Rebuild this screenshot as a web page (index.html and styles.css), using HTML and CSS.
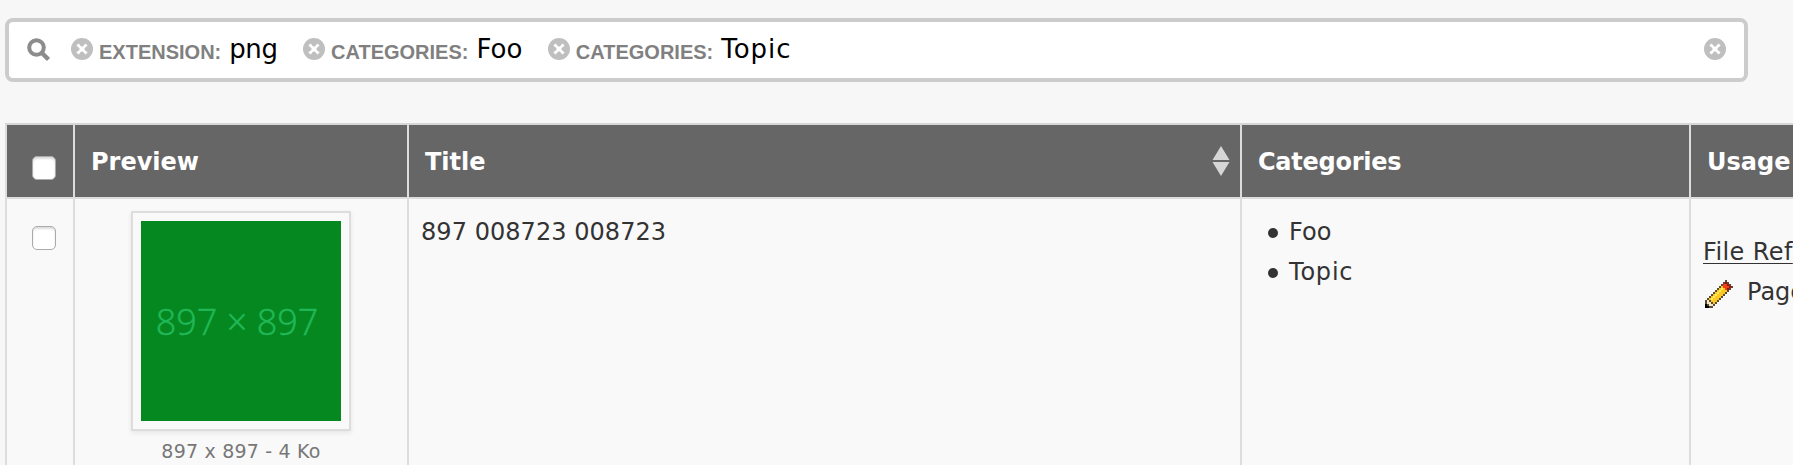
FILE: index.html
```html
<!DOCTYPE html>
<html lang="en">
<head>
<meta charset="utf-8">
<title>Files</title>
<link rel="stylesheet" href="styles.css">
</head>
<body>
<svg class="defs" aria-hidden="true">
  <symbol id="remove" viewBox="0 0 22 22">
    <circle cx="11" cy="11" r="11" fill="#bfbfbf"/>
    <path d="M7.500 7.500L14.500 14.500M14.500 7.500L7.500 14.500" stroke="#fff" stroke-width="3" stroke-linecap="square"/>
    <path d="M9.500 5h3v3h-3zM9.500 14h3v3h-3zM5 9.500h3v3H5zM14 9.500h3v3h-3z" fill="#bfbfbf"/>
  </symbol>
</svg>
<div class="search">
  <svg class="magnifier" viewBox="0 0 24 24"><circle cx="9.500" cy="9.500" r="7.300" fill="none" stroke="#8c8c8c" stroke-width="4"/><path d="M15 15L21.500 21.500" stroke="#8c8c8c" stroke-width="4.500"/></svg>
  <div class="facet"><svg class="remove"><use href="#remove"/></svg><span class="key">EXTENSION:</span><span class="value png">png</span></div>
  <div class="facet"><svg class="remove"><use href="#remove"/></svg><span class="key">CATEGORIES:</span><span class="value">Foo</span></div>
  <div class="facet"><svg class="remove"><use href="#remove"/></svg><span class="key">CATEGORIES:</span><span class="value topic">Topic</span></div>
  <svg class="remove clear"><use href="#remove"/></svg>
</div>
<table class="files">
  <colgroup><col class="c-check"><col class="c-preview"><col class="c-title"><col class="c-cat"><col class="c-usage"></colgroup>
  <thead>
    <tr>
      <th class="check"><span class="box"></span></th>
      <th>Preview</th>
      <th><div class="sortable"><span>Title</span><svg class="sort" viewBox="0 0 18 30"><path d="M9 0L17.500 14H.5ZM.5 16H17.500L9 30Z" fill="#d6d6d6"/></svg></div></th>
      <th class="label-cat">Categories</th>
      <th class="label-usage">Usage</th>
    </tr>
  </thead>
  <tbody>
    <tr>
      <td class="check"><span class="box"></span></td>
      <td class="preview"><div class="frame"><div class="thumb">897 <span class="times">×</span> 897</div></div><div class="caption">897 x 897 - 4 Ko</div></td>
      <td class="title">897 008723 008723</td>
      <td class="cats"><ul><li>Foo</li><li class="topic">Topic</li></ul></td>
      <td class="usage"><div class="ref">File Ref</div><div class="page">
        <svg class="pencil" viewBox="0 0 14 14" shape-rendering="crispEdges">
          <path d="M10 0h1v1h1v1h1v1h1v1h-1v1h-1v1h-1v1h-1v1h-1v1h-1v1h-1v1h-1v1h-1v1h-1v1H0v-4h1V9h1V8h1V7h1V6h1V5h1V4h1V3h1V2h1V1h1z" fill="#574c3a"/>
          <path d="M8 3h1v1h1v1h1v1h-1v1H9v1H8v1H7v1H6v1H5v1H4v-1H3v-1H2V9h1V8h1V7h1V6h1V5h1V4h1z" fill="#ffc81e"/>
          <path d="M3 9h1V8h1V7h1V6h1V5h1V4h1v1H8v1H7v1H6v1H5v1H4v1H3z" fill="#ffef62"/>
          <path d="M9 2h3v2h-1v1h-1V4H9z" fill="#f04018"/>
          <path d="M10 1h1v1h1v1h1v1h-1v1h-1V4h1V3h-1V2h-1z" fill="#a41010"/>
          <path d="M1 10h1v1h1v1h1v1H2v-1H1z" fill="#f6e8c4"/>
          <path d="M0 12h1v1h1v1H0z" fill="#000"/>
        </svg><span>Page</span></div></td>
    </tr>
  </tbody>
</table>
</body>
</html>
```
FILE: styles.css
```css
body { margin: 0; height: 465px; overflow: hidden; background: #f7f7f7; color: #333; font: 24px/40px "DejaVu Sans", sans-serif; }
.defs { display: none; }
.search { box-sizing: border-box; width: 1743px; height: 64px; margin: 18px 0 41px 5px; padding: 0 18px; border: 4px solid #ccc; border-radius: 8px; background: #fff; display: flex; align-items: center; }
.magnifier { width: 24px; height: 24px; margin-right: 20px; }
.remove { width: 22px; height: 22px; margin-bottom: 2px; flex: none; }
.facet { display: flex; align-items: center; margin-right: 25.5px; }
.key { margin: 3px 0 0 6px; color: #808080; font: bold 20px/40px "Liberation Sans", sans-serif; }
.value { margin: 0 0 2px 8px; color: #000; font-size: 26px; }
.value.png { letter-spacing: -.4px; }
.value.topic { letter-spacing: 1px; }
.clear { margin-left: auto; }
.files { width: 1788px; margin-left: 5px; border-spacing: 0; table-layout: fixed; border-top: 2px solid #d6d6d6; background: #f9f9f9; }
.c-check { width: 68px; }
.c-preview { width: 334px; }
.c-title { width: 833px; }
.c-cat { width: 449px; }
th, td { box-sizing: border-box; border-left: 2px solid #ddd; border-bottom: 2px solid #ddd; text-align: left; }
th { height: 74px; padding: 1px 10px 0 16px; background: #666; color: #fff; }
td { height: 266px; padding: 13px 12px 0; border-bottom: 0; vertical-align: top; }
.check { padding-left: 25px; }
.box { box-sizing: border-box; display: block; width: 24px; height: 24px; border: 1px solid #aaa; border-radius: 5px; background: #fff; box-shadow: inset 0 2px 2px #ddd; }
th .box { margin-top: 13px; }
td .box { margin-top: 14px; }
.label-cat { letter-spacing: -.25px; }
.label-usage { padding-right: 0; }
.sortable { display: flex; align-items: center; justify-content: space-between; }
.sort { width: 18px; height: 30px; margin-bottom: 1px; }
td.preview { padding-top: 12px; text-align: center; font-size: 0; }
td.title { padding-left: 12px; letter-spacing: .05px; }
.frame { display: inline-block; padding: 8px; border: 2px solid #ddd; box-shadow: 0 2px 5px rgba(0,0,0,.08); }
.thumb { box-sizing: border-box; width: 200px; height: 200px; padding-right: 8px; background: #058820; color: #20b858; font: 300 36px/202px "Open Sans", sans-serif; -webkit-text-stroke: .5px #20b858; }
.caption { color: #777; font-size: 19px; line-height: 40px; letter-spacing: .2px; white-space: nowrap; }
.cats ul { margin: 0; padding-left: 14px; list-style: none; }
.cats li { display: flex; align-items: center; gap: 11px; }
.cats li::before { content: ""; width: 10px; height: 10px; margin-top: 2px; border-radius: 50%; background: #333; }
.cats .topic { letter-spacing: .8px; }
td.usage { padding: 33px 0 0 12px; overflow: hidden; }
.ref { text-decoration: underline; text-decoration-thickness: 1px; text-underline-offset: 3px; white-space: nowrap; letter-spacing: .4px; }
.page { display: flex; align-items: center; gap: 14px; }
.pencil { width: 28px; height: 28px; margin: 3px 0 0 2px; flex: none; }
```
